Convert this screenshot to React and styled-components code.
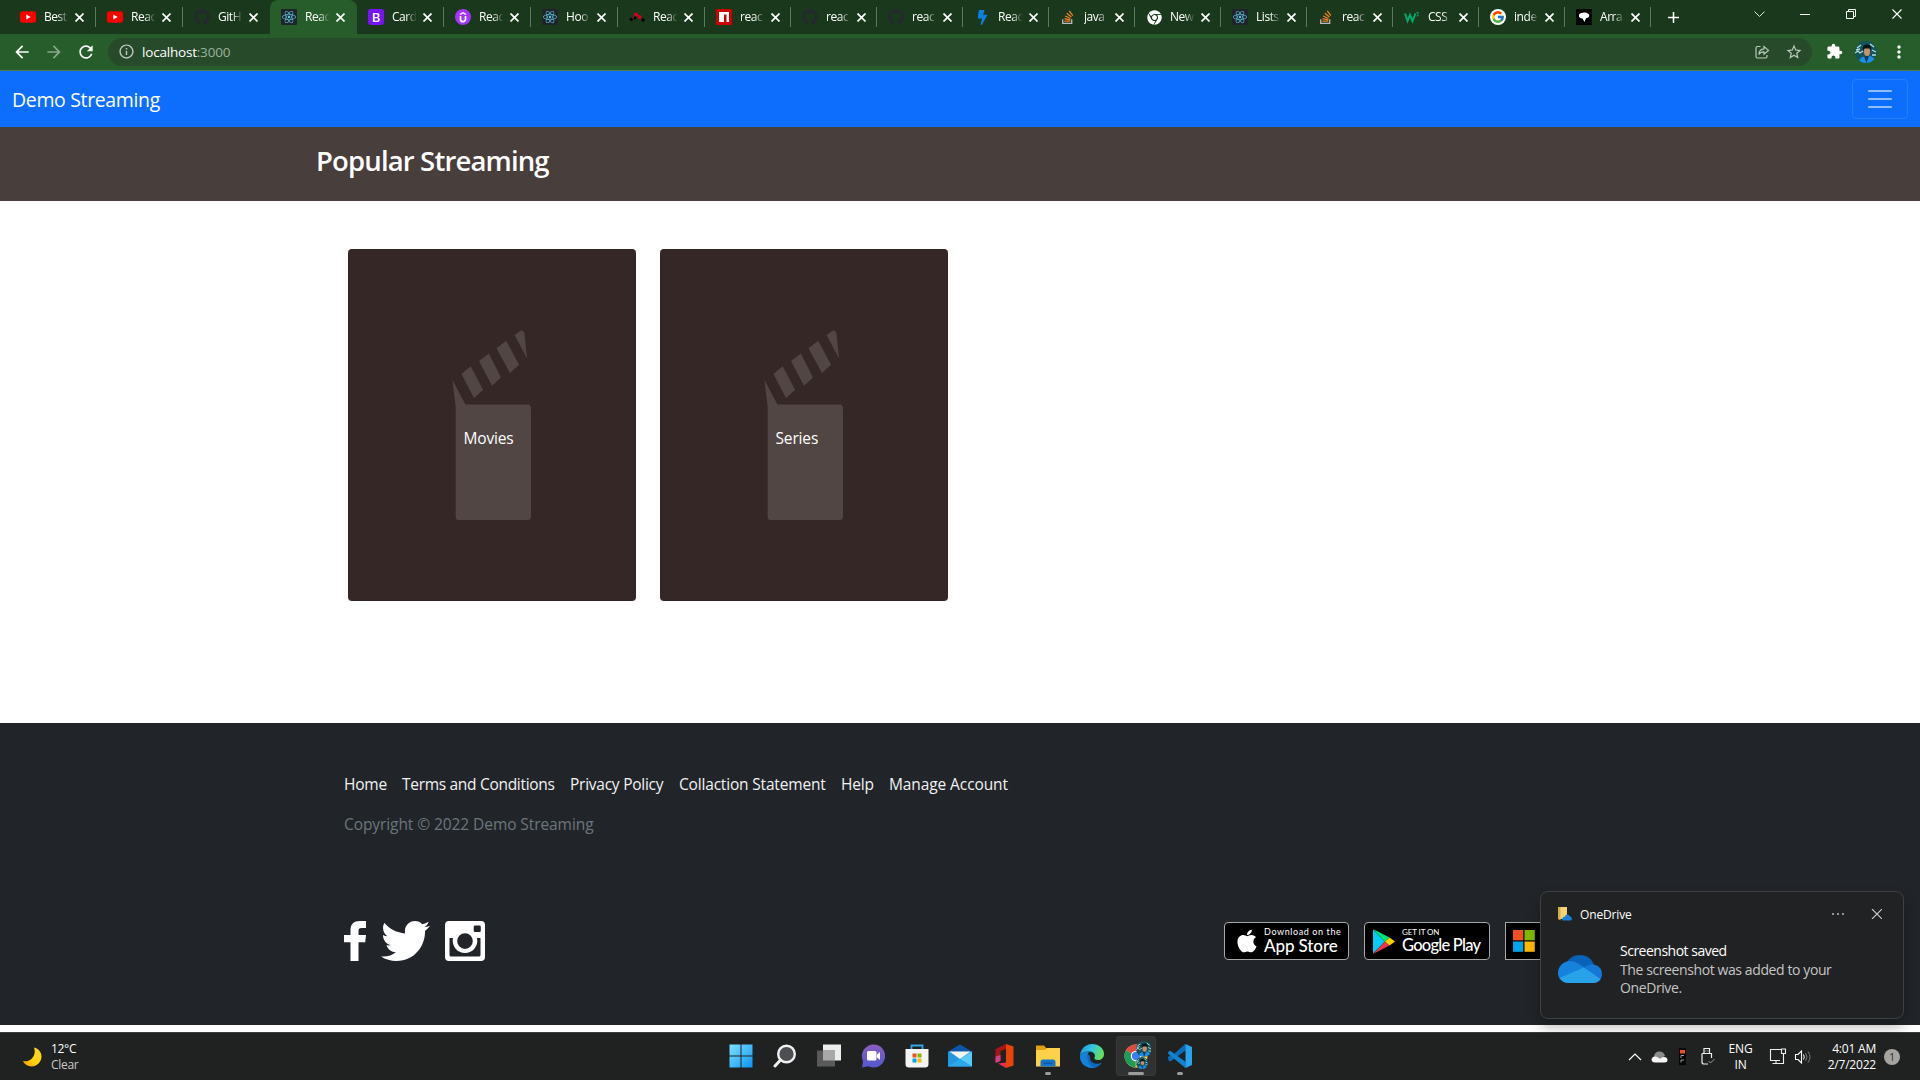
import React from "react";
import styled, { createGlobalStyle, css } from "styled-components";
import { FaReact, FaGithub, FaChrome, FaTwitter, FaApple, FaBolt } from "react-icons/fa";
import { FcGoogle } from "react-icons/fc";
import { MdArrowBack, MdArrowForward, MdRefresh, MdExtension, MdStarBorder, MdMoreVert, MdAdd, MdInfoOutline } from "react-icons/md";

const Global = createGlobalStyle`
  * { box-sizing: border-box; }
  body { margin: 0; overflow: hidden; font-family: "Open Sans", "Noto Sans", sans-serif; background: #fff; }
  svg { display: block; flex: none; }
`;

const Screen = styled.div`
  width: 1920px;
  height: 1080px;
  display: flex;
  flex-direction: column;
  overflow: hidden;
`;

/* ---------- browser ---------- */
const TabStrip = styled.div`
  height: 34px;
  flex: none;
  display: flex;
  align-items: stretch;
  padding-left: 8.5px;
  background: #1a381b;
`;
const Tab = styled.div`
  width: ${(p) => p.$w}px;
  flex: none;
  display: flex;
  align-items: center;
  padding-left: 11.5px;
  position: relative;
  ${(p) =>
    p.$active
      ? css`
          background: #275d2b;
          border-radius: 8px 8px 0 0;
        `
      : css`
          &::after {
            content: "";
            position: absolute;
            right: 0;
            top: 7px;
            width: 1px;
            height: 20px;
            background: ${p.$divider ? "#5d7a5e" : "transparent"};
          }
        `}
`;
const TabTitle = styled.div`
  width: 28px;
  margin: 0 3px 0 8px;
  white-space: nowrap;
  font-size: 12px;
  line-height: 16px;
  letter-spacing: -0.45px;
  color: #fff;
  mask-image: linear-gradient(90deg, #000 50%, transparent 88%);
`;
const Fav = styled.div`
  width: 16px;
  height: 16px;
  flex: none;
  display: flex;
  align-items: center;
  justify-content: center;
  border-radius: ${(p) => p.$r || 0}px;
  background: ${(p) => p.$bg || "transparent"};
  color: ${(p) => p.$c || "#fff"};
  font: ${(p) => p.$wt || 600} ${(p) => p.$fs || 12}px "Open Sans", sans-serif;
`;
const NewTab = styled.div`
  display: flex;
  align-items: center;
  padding-left: 13px;
  color: #fff;
`;
const WindowButtons = styled.div`
  margin-left: auto;
  display: flex;
  height: 28px;
  align-items: center;
  & > div {
    width: 46px;
    display: flex;
    justify-content: center;
  }
`;
const Toolbar = styled.div`
  height: 37px;
  flex: none;
  display: flex;
  align-items: center;
  padding: 0 0 1px 12px;
  background: #275d2b;
  border-bottom: 1px solid #4b7d4f;
  color: #fff;
`;
const Nav = styled.div`
  display: flex;
  gap: 12px;
  width: 96px;
  & > :nth-child(2) {
    opacity: 0.45;
  }
`;
const Omnibox = styled.div`
  width: 1704px;
  height: 28px;
  border-radius: 14px;
  background: #264a2a;
  display: flex;
  align-items: center;
  padding: 0 9px 0 10px;
  color: #bcc8bd;
`;
const Url = styled.div`
  flex: 1;
  margin-left: 7px;
  font-size: 13.5px;
  line-height: 20px;
  letter-spacing: -0.2px;
  color: #9eb09f;
  b {
    font-weight: 400;
    color: #fff;
  }
`;
const OmniActions = styled.div`
  display: flex;
  align-items: center;
  gap: 15px;
`;
const ToolbarEnd = styled.div`
  display: flex;
  align-items: center;
  padding-left: 14px;
  gap: 12px;
`;

/* ---------- page ---------- */
const Navbar = styled.header`
  height: 56px;
  flex: none;
  background: #0d6efd;
  display: flex;
  align-items: center;
  justify-content: space-between;
  padding: 0 12px;
`;
const Brand = styled.div`
  padding-top: 1px;
  font-size: 19.5px;
  line-height: 30px;
  letter-spacing: -0.35px;
  color: #fff;
`;
const Toggler = styled.div`
  width: 56px;
  height: 40px;
  border: 1px solid rgba(255, 255, 255, 0.1);
  border-radius: 4px;
  display: flex;
  flex-direction: column;
  align-items: center;
  justify-content: center;
  gap: 6px;
  i {
    width: 24px;
    height: 2px;
    border-radius: 1px;
    background: rgba(255, 255, 255, 0.55);
  }
`;
const Banner = styled.div`
  height: 74px;
  flex: none;
  background: #483e3c;
  padding: 14px 0 0 316px;
`;
const Title = styled.h3`
  margin: 0;
  font-size: 27.5px;
  line-height: 40px;
  font-weight: 600;
  letter-spacing: -0.85px;
  color: #fff;
`;
const Cards = styled.main`
  height: 522px;
  flex: none;
  padding: 48px 0 0 348px;
  display: flex;
  align-items: flex-start;
  gap: 24px;
  background: #fff;
`;
const Card = styled.article`
  width: 288px;
  height: 352px;
  border-radius: 4px;
  background: #352726;
  display: grid;
  & > * {
    grid-area: 1 / 1;
  }
`;
const CardLabel = styled.div`
  align-self: center;
  padding: 25px 0 0 115.5px;
  font-size: 15.5px;
  line-height: 24px;
  letter-spacing: -0.15px;
  color: #fff;
`;
const Footer = styled.footer`
  height: 302px;
  flex: none;
  background: #212529;
  padding: 49px 0 0 344px;
`;
const Links = styled.nav`
  display: flex;
  gap: 15px;
  height: 24px;
`;
const FootLink = styled.a`
  width: ${(p) => p.$w}px;
  font-size: 15.5px;
  line-height: 24px;
  white-space: nowrap;
  letter-spacing: ${(p) => p.$ls}px;
  color: #f1f2f3;
`;
const Copyright = styled.div`
  margin-top: 16px;
  font-size: 15.5px;
  line-height: 24px;
  letter-spacing: -0.08px;
  color: #6c757d;
`;
const FootRow = styled.div`
  display: flex;
  align-items: center;
  margin-top: 85px;
  height: 40px;
`;
const Social = styled.div`
  display: flex;
  gap: 15px;
  width: 880px;
`;
const Stores = styled.div`
  display: flex;
  gap: 15px;
`;
const Store = styled.div`
  width: ${(p) => p.$w}px;
  height: 38px;
  flex: none;
  background: #000;
  border: 1px solid #a6a6a6;
  border-radius: ${(p) => p.$r}px;
  display: flex;
  align-items: center;
  padding-left: ${(p) => p.$pl}px;
  gap: ${(p) => p.$gap}px;
  color: #fff;
`;
const StoreText = styled.div`
  display: flex;
  flex-direction: column;
  white-space: nowrap;
  margin-top: -2px;
  small {
    font: 400 ${(p) => p.$s1}px/10px Lato, sans-serif;
    letter-spacing: ${(p) => p.$l1}px;
  }
  span {
    font: 500 ${(p) => p.$s2}px/17px Lato, sans-serif;
    letter-spacing: ${(p) => p.$l2}px;
  }
`;
const PageEnd = styled.div`
  height: 7px;
  flex: none;
  background: #fff;
`;

/* ---------- taskbar ---------- */
const Taskbar = styled.div`
  height: 48px;
  flex: none;
  background: #202121;
  display: grid;
  grid-template-columns: 720px 480px 1fr;
  border-top: 1px solid #3c3c3c;
  color: #fff;
  font-size: 12px;
  line-height: 16px;
`;
const Weather = styled.div`
  display: flex;
  align-items: center;
  padding-left: 22px;
  gap: 9px;
`;
const Lines = styled.div`
  text-align: ${(p) => p.$a || "left"};
  width: ${(p) => (p.$w ? p.$w + "px" : "auto")};
  letter-spacing: ${(p) => p.$ls || 0}px;
  white-space: nowrap;
  span {
    color: #c9c9c9;
  }
`;
const Apps = styled.div`
  display: flex;
  gap: 4px;
  padding: 3px 0 0 1px;
`;
const TaskButton = styled.div`
  width: 40px;
  height: 40px;
  border-radius: 4px;
  position: relative;
  display: flex;
  align-items: center;
  justify-content: center;
  background: ${(p) => (p.$on ? "#303132" : "transparent")};
  box-shadow: ${(p) => (p.$on ? "inset 0 0 0 1px #373838" : "none")};
  &::after {
    content: "";
    position: absolute;
    bottom: 1px;
    width: ${(p) => p.$bar || 0}px;
    height: 3px;
    border-radius: 2px;
    background: #9d9c9b;
  }
`;
const Tray = styled.div`
  display: flex;
  align-items: center;
  padding-left: 428px;
`;
const TrayItem = styled.div`
  width: ${(p) => p.$w}px;
  flex: none;
  display: flex;
`;
const Count = styled.div`
  width: 16px;
  height: 16px;
  margin-left: 8px;
  border-radius: 50%;
  background: #a5a4a0;
  color: #2a2a2a;
  font-size: 10px;
  line-height: 16px;
  text-align: center;
`;

/* ---------- notification ---------- */
const Toast = styled.aside`
  position: absolute;
  left: 1540px;
  top: 891px;
  width: 364px;
  height: 128px;
  border: 1px solid #3f4041;
  border-radius: 8px;
  background: #212223;
  box-shadow: 0 8px 14px rgba(0, 0, 0, 0.28);
  color: #fff;
`;
const ToastHead = styled.div`
  display: flex;
  align-items: center;
  height: 44px;
  padding: 0 21px 0 17px;
  font-size: 12px;
  letter-spacing: -0.15px;
  & > span {
    margin-left: 8px;
    flex: 1;
  }
`;
const ToastBody = styled.div`
  display: flex;
  padding: 6px 0 0 17px;
  gap: 18px;
`;
const ToastText = styled.div`
  font-size: 14px;
  line-height: 18px;
  color: #c5c5c5;
  white-space: nowrap;
  letter-spacing: -0.4px;
  strong {
    display: block;
    margin-top: -1px;
    font-weight: 400;
    line-height: 20px;
    letter-spacing: -0.5px;
    color: #fff;
  }
`;

const favs = {
  yt: (
    <svg width="16" height="16" viewBox="0 0 16 16"><rect y="2.3" width="16" height="11.4" rx="2.6" fill="#f00" /><path d="M6.3 5.5v5l4.4-2.5z" fill="#fff" /></svg>
  ),
  git: <Fav $c="#24292f"><FaGithub size={16} /></Fav>,
  react: <Fav $bg="#20232a" $c="#5cc4e0" $r={1}><FaReact size={14} /></Fav>,
  boot: <Fav $bg="#7713f6" $r={3} $fs={13}>B</Fav>,
  ude: (
    <svg width="16" height="16" viewBox="0 0 16 16" fill="none"><circle cx="8" cy="8" r="8" fill="#a435f0" /><path d="M5.500 7v3.200a2.500 2.500 0 0 0 5 0V7" stroke="#fff" strokeWidth="1.700" /><path d="M5 5.500 8 3.700l3 1.800" stroke="#fff" strokeWidth="1.400" /></svg>
  ),
  dots: (
    <svg width="16" height="16" viewBox="0 0 16 16"><path d="m3 10 4-5 6 6" stroke="#d0021b" strokeWidth="1" fill="none" /><g fill="#d0021b"><circle cx="7" cy="5.5" r="2" /><circle cx="10.5" cy="8" r="2" /></g><g fill="#000"><circle cx="2.2" cy="10.3" r="1.6" /><circle cx="6" cy="9" r="1.4" /><circle cx="14" cy="11" r="1.7" /></g></svg>
  ),
  npm: <svg width="16" height="16" viewBox="0 0 16 16"><path fill="#cb0000" d="M0 0h16v16H0z" /><path fill="#fff" d="M3 3h10v10h-2.5V5.5H8V13H3z" /></svg>,
  bolt: <Fav $c="#0e7fe0"><FaBolt size={15} /></Fav>,
  so: (
    <svg width="16" height="16" viewBox="0 0 16 16" fill="none">
      <path d="M2.7 10.3v4h9v-4" stroke="#bcbbbb" strokeWidth="1.3" />
      <path d="M4.3 12.2h6M4.5 9.7l5.8 1.1M5.2 7l5.3 2.5M6.8 4.2l4.6 3.8M9.3 1.8l3.5 4.8" stroke="#f48024" strokeWidth="1.3" />
    </svg>
  ),
  chrome: <Fav><FaChrome size={15} /></Fav>,
  w3: (
    <svg width="16" height="16" viewBox="0 0 16 16" fill="none" stroke="#04aa6d"><path d="m1 4.500 2.500 7.500L6 6l2.500 6L11.500 4.500" strokeWidth="2" /><path d="M12.500 3.500h2l-1 1.500q1.500.5.5 1.800l-1.500.2" strokeWidth=".9" /></svg>
  ),
  google: <Fav $bg="#fff" $r={8}><FcGoogle size={14} /></Fav>,
  arr: <svg width="16" height="16" viewBox="0 0 16 16"><path d="M0 0h16v16H0z" /><path fill="#fff" d="M3 5.500C4.500 3 11 2.500 13 5.500c.8 2-.5 3.500-3 3.800L8.500 13 6.500 9.500C4 9.500 2.500 8 3 5.500z" /></svg>,
};

const tabs = [
  ["yt", "Best"], ["yt", "Reac"], ["git", "GitH"], ["react", "Reac"], ["boot", "Card"], ["ude", "Reac"], ["react", "Hoo"], ["dots", "Reac"],
  ["npm", "reac"], ["git", "reac"], ["git", "reac"], ["bolt", "Reac"], ["so", "java"], ["chrome", "New"], ["react", "Lists"], ["so", "reac"],
  ["w3", "CSS"], ["google", "inde"], ["arr", "Arra"],
];

const links = [
  ["Home", 43, -0.2], ["Terms and Conditions", 153, -0.3], ["Privacy Policy", 94, -0.25],
  ["Collaction Statement", 147, -0.18], ["Help", 33, -0.2], ["Manage Account", 121, -0.1],
];

const X = ({ s = 8, w = 1.7, c = "#fff" }) => (
  <svg width={s} height={s} viewBox={`0 0 ${s} ${s}`}><path d={`M.5.5 ${s - 0.5} ${s - 0.5}M${s - 0.5}.5.5 ${s - 0.5}`} stroke={c} strokeWidth={w} /></svg>
);

const Avatar = ({ size = 22 }) => (
  <svg width={size} height={size} viewBox="0 0 22 22">
    <clipPath id="av"><circle cx="11" cy="11" r="11" /></clipPath>
    <g clipPath="url(#av)">
      <path fill="#14545a" d="M0 0h22v22H0z" />
      <path d="m0 12 3-2 2 2 3-2M2 7l4-3M15 3l4 3M17 9l4 2M1 9l4-1M17 14l4 0" stroke="#b8dedb" strokeWidth="1.3" fill="none" />
      <path fill="#1c8fe0" d="M4 22c0-5 3-6 7-7s9 1 10 7z" />
      <path fill="#113a63" d="m9 15 2.500 7L14 15z" />
      <ellipse cx="12" cy="10.500" rx="3" ry="4.500" fill="#c98f70" />
      <path fill="#0b1318" d="M8 9.500c-.8-5 1.500-6 4-6s4.800 1.500 4 6L14.800 7.500H9.500z" />
    </g>
  </svg>
);

const Clapper = () => (
  <svg width="288" height="352" viewBox="0 0 288 352">
    <g fill="#524645">
      <path d="M104.400 131 117.500 155.500H180q3 0 3 4.500v107q0 4-3 4h-70q-2.300 0-2.300-4V158z" />
      <path d="m113.400 125 9.400-7.700 12.200 23.400-9 8.300zM131 112l9.800-7.500 12.200 24-9 8.300zM148.500 99.300l9.800-7.500 12.700 24-9 8.300zM166.500 86l7.300-5 2.500 2.500 2.700 26z" />
    </g>
  </svg>
);

const OneCloud = () => (
  <svg width="44" height="46" viewBox="0 -13 44 46">
    <path d="M8 10C10 3 16 0 22 0c7 0 12 4 14 10l-8 10z" fill="#0a62b8" />
    <path d="M11 28C4 28 0 23.500 0 18 0 11 5.500 6 12 6c3 0 5 .8 7 2l10 6-14 12z" fill="#1682dc" />
    <path d="M26 13c2-2 5-3.500 8-3.500 6 0 10 4 10 9.500 0 5-3.500 9-9 9z" fill="#1577d6" />
    <path d="M1.500 23 26 12.500 42.500 24c-1.500 2.500-4.500 4-7.500 4H11c-4 0-7.500-2-9.500-5z" fill="#28a3ea" />
  </svg>
);

export default function App() {
  return (
    <Screen>
      <Global />
      <TabStrip>
        {tabs.map(([f, t], i) => (
          <Tab key={i} $w={i < 8 ? 87 : 86} $active={i === 3} $divider={i !== 2}>
            {favs[f]}
            <TabTitle>{t}</TabTitle>
            <X s={9} />
          </Tab>
        ))}
        <NewTab><MdAdd size={19} /></NewTab>
        <WindowButtons>
          <div><svg width="11" height="7" viewBox="0 0 11 7" fill="none" stroke="#dfe5df"><path d="m.5.5 5 5 5-5" /></svg></div>
          <div><svg width="10" height="1"><path fill="#fff" d="M0 0h10v1H0z" /></svg></div>
          <div><svg width="10" height="10" fill="none" stroke="#fff"><path d="M.5 2.500h7v7h-7zM2.500 2.500v-2h7v7h-2" /></svg></div>
          <div><X s={10} w={1.1} /></div>
        </WindowButtons>
      </TabStrip>
      <Toolbar>
        <Nav><MdArrowBack size={20} /><MdArrowForward size={20} /><MdRefresh size={20} /></Nav>
        <Omnibox>
          <MdInfoOutline size={17} />
          <Url><b>localhost</b>:3000</Url>
          <OmniActions>
            <svg width="16" height="16" viewBox="0 0 16 16" fill="none" stroke="#bcc8bd" strokeWidth="1.200"><path d="M6.500 2.500H3.500q-1.500 0-1.500 1.500v8.500Q2 14 3.500 14h8q1.500 0 1.500-1.500V11" /><path d="M10 2.500v2.300C6.500 5 5 7.500 4.800 10.500 6 8.500 7.500 7.800 10 7.800v2.400l4.500-3.800z" /></svg>
            <MdStarBorder size={18} />
          </OmniActions>
        </Omnibox>
        <ToolbarEnd><MdExtension size={17} /><Avatar /><MdMoreVert size={20} /></ToolbarEnd>
      </Toolbar>

      <Navbar>
        <Brand>Demo Streaming</Brand>
        <Toggler><i /><i /><i /></Toggler>
      </Navbar>
      <Banner><Title>Popular Streaming</Title></Banner>
      <Cards>
        {["Movies", "Series"].map((n) => (
          <Card key={n}><Clapper /><CardLabel>{n}</CardLabel></Card>
        ))}
      </Cards>
      <Footer>
        <Links>
          {links.map(([t, w, ls]) => (
            <FootLink key={t} $w={w} $ls={ls}>{t}</FootLink>
          ))}
        </Links>
        <Copyright>Copyright © 2022 Demo Streaming</Copyright>
        <FootRow>
          <Social>
            <svg width="22" height="40" viewBox="0 0 22 40"><path fill="#fff" d="M22 0v7h-4.500c-2.500 0-3 1.200-3 3v4H22l-.8 7.200h-6.700V40H6.500V21.200H0V14h6.500V9C6.500 3 10 0 16 0z" /></svg>
            <svg width="49" height="40" viewBox="0 48 512 416" preserveAspectRatio="none"><FaTwitter size={512} color="#fff" /></svg>
            <svg width="40" height="40" viewBox="0 0 40 40"><path fillRule="evenodd" fill="#fff" d="M4 0h32a4 4 0 0 1 4 4v32a4 4 0 0 1-4 4H4a4 4 0 0 1-4-4V4a4 4 0 0 1 4-4zm26 4.500a1.300 1.300 0 0 0-1.300 1.300v4a1.300 1.300 0 0 0 1.300 1.300h4.500a1.300 1.300 0 0 0 1.300-1.300v-4a1.300 1.300 0 0 0-1.300-1.300zM4.500 17v17a1.500 1.500 0 0 0 1.500 1.500h28a1.500 1.500 0 0 0 1.500-1.500V17H32a12.300 12.300 0 1 1-24 0zM20 12.300a7.800 7.800 0 1 0 0 15.600 7.800 7.800 0 0 0 0-15.600z" /></svg>
          </Social>
          <Stores>
            <Store $w={125} $r={4} $pl={9} $gap={4}>
              <FaApple size={26} />
              <StoreText $s1={9} $l1={0.6} $s2={17} $l2={-0.1}><small>Download on the</small><span>App Store</span></StoreText>
            </Store>
            <Store $w={126} $r={4} $pl={8} $gap={7}>
              <svg width="22" height="25" viewBox="0 0 22 25"><path fill="#00cdf9" d="M0 .5v24l12-12z" /><path fill="#00e676" d="M0 0l16.500 8.500-4.500 4z" /><path fill="#f43249" d="M0 25l16.500-8.500-4.500-4z" /><path fill="#ffce00" d="m12 12.500 4.500-4 5.500 4-5.500 4z" /></svg>
              <StoreText $s1={8} $l1={-0.1} $s2={16.5} $l2={-0.75}><small>GET IT ON</small><span>Google Play</span></StoreText>
            </Store>
            <Store $w={126} $r={0} $pl={7} $gap={6}>
              <svg width="22" height="22"><path fill="#f25022" d="M0 0h10.300v10.300H0z" /><path fill="#7fba00" d="M11.500 0h10.300v10.300H11.500z" /><path fill="#00a4ef" d="M0 11.500h10.300v10.300H0z" /><path fill="#ffb900" d="M11.500 11.500h10.300v10.300H11.500z" /></svg>
            </Store>
          </Stores>
        </FootRow>
      </Footer>
      <PageEnd />

      <Taskbar>
        <Weather>
          <svg width="20" height="20" viewBox="0 0 20 20"><defs><linearGradient id="mn" x1="1" y1="0" x2="0" y2="1"><stop stopColor="#ffd42a" /><stop offset=".55" stopColor="#ffd60a" /><stop offset="1" stopColor="#f59a00" /></linearGradient></defs><path fill="url(#mn)" d="M12 .5c8 2 10 11 4 16.500C10.500 21.500 3.500 19.500.8 14 8 16 15 9 12 .5z" /></svg>
          <Lines $ls={-0.3}>12°C<br /><span>Clear</span></Lines>
        </Weather>
        <Apps>
          <TaskButton><svg width="24" height="24" viewBox="0 0 24 24"><defs><linearGradient id="wn" x1="0" y1="0" x2="1" y2="1"><stop stopColor="#7fe3ff" /><stop offset="1" stopColor="#0c93f5" /></linearGradient></defs><path fill="url(#wn)" d="M.5.5h11v11H.5zM12.500.5h11v11h-11zM.5 12.500h11v11H.5zM12.500 12.500h11v11h-11z" /></svg></TaskButton>
          <TaskButton><svg width="24" height="24" viewBox="0 0 24 24" fill="none"><circle cx="13.500" cy="10" r="8.300" fill="#4b4f52" stroke="#f0f0f0" strokeWidth="2.400" /><path d="M7.500 16 2 22" stroke="#f0f0f0" strokeWidth="3" strokeLinecap="round" /></svg></TaskButton>
          <TaskButton><svg width="24" height="24" viewBox="0 0 24 24"><path fill="#eee" d="M6 .5h18v16H6z" /><path fill="#5a5a5a" d="M0 6.500h18v16H0z" /><path fill="#a9a9a9" d="M6 6.500h12v10H6z" /></svg></TaskButton>
          <TaskButton><svg width="24" height="24" viewBox="0 0 24 24"><defs><linearGradient id="ch" x1="0" y1="0" x2="0" y2="1"><stop stopColor="#8a5fc0" /><stop offset="1" stopColor="#5258cf" /></linearGradient></defs><path fill="url(#ch)" d="M12.500 .5a11.500 11.500 0 1 1-5 21.800L1 23.500l1-6.500A11.500 11.500 0 0 1 12.500 .5z" /><rect x="6" y="7" width="9.500" height="9.500" rx="1.500" fill="#fff" /><path fill="#fff" d="M16 10.500 19 8v8l-3-2.500z" /></svg></TaskButton>
          <TaskButton><svg width="24" height="24" viewBox="0 0 24 24"><path d="M6.500 6V1.500h11V6" fill="none" stroke="#2fa8ea" strokeWidth="1.800" /><path fill="#f4f4f4" d="M.5 5h23v15q0 3.500-3.500 3.500H4Q.5 23.500.5 20z" /><path fill="#f25022" d="M7.500 9.500h4v4h-4z" /><path fill="#7fba00" d="M12.500 9.500h4v4h-4z" /><path fill="#00a4ef" d="M7.500 14.500h4v4h-4z" /><path fill="#ffb900" d="M12.500 14.500h4v4h-4z" /></svg></TaskButton>
          <TaskButton><svg width="24" height="24" viewBox="0 0 24 24"><path fill="#0f56a8" d="M0 7.500 12 .5l12 7z" /><path fill="#2398e2" d="M0 7.500h24v15H0z" /><path fill="#f4f4f4" d="M1.500 7.500h21L12 15z" /><path fill="#57ccf5" d="M24 7.500v15L12 15z" /><path fill="#2fa6e8" d="m0 22.500 12-7.500 12 7.500z" /></svg></TaskButton>
          <TaskButton><svg width="24" height="24" viewBox="0 0 24 24"><path fill="#e8430a" d="m14 0 7.500 2.500v19L14 24z" /><path fill="#a81515" d="M14 0v5L8.500 7v10L3.500 18.500V5z" /><path fill="#d83b8a" d="M3.500 12.500 8.500 11v6l-5 2z" /><path fill="#e33050" d="m6 19.500 8-1V24z" /></svg></TaskButton>
          <TaskButton $bar={6}><svg width="24" height="24" viewBox="0 0 24 24"><path fill="#dfa013" d="M0 1.500h8l2.500 3H24V10H0z" /><path fill="#ffd04a" d="M0 6h8.500L11 4h13v18.500H0z" /><path fill="#1277cc" d="M4.500 22.500V18q0-2.500 2.500-2.500h10q2.500 0 2.500 2.500v4.500z" /><path fill="#0b569c" d="M7.500 18.500h9V20h-9z" /></svg></TaskButton>
          <TaskButton><svg width="24" height="24" viewBox="0 0 24 24"><defs><linearGradient id="eg" x1="0" y1="0" x2="1" y2=".3"><stop stopColor="#1a8fe0" /><stop offset=".55" stopColor="#36c6e0" /><stop offset="1" stopColor="#63e05c" /></linearGradient></defs><path fill="#0f68bd" d="M0 12c0 7 5 12 12 12 4 0 8-2 10-5.500-6 3-13 .5-12-6.500C6 8 1 8 0 12z" /><path fill="url(#eg)" d="M0 11.500C.5 5 5.500 0 12 0c7 0 12 4.500 12 10 0 4-3 6-6 6-3 0-4-1-3.500-2.500C16 11 14 8 10 7.500 5.500 7 1.500 8.500 0 11.500z" /><path fill="#1580d5" d="M0 12C1.500 8.500 5.500 7 10 7.500 7.500 9 6.500 12 7.500 15.500c1 4 4 7.500 7.500 8.200C7 25 0 20 0 12z" /></svg></TaskButton>
          <TaskButton $on $bar={16}>
            <svg width="30" height="30" viewBox="-1 -1 30 30"><circle cx="14" cy="14" r="11.500" fill="#ffcd40" /><path fill="#e04a3f" d="M14 14 4 8.200A11.500 11.500 0 0 1 24 8.200z" /><path fill="#1f9d58" d="M14 14 13.500 25.500A11.500 11.500 0 0 1 4 8.200z" /><circle cx="14" cy="14" r="5.300" fill="#fff" /><circle cx="14" cy="14" r="4.200" fill="#3f7ef0" /><g transform="translate(14 -1) scale(.72)"><Avatar /></g><g transform="translate(14 15) scale(.55)"><Avatar /></g></svg>
          </TaskButton>
          <TaskButton $bar={6}><svg width="24" height="24" viewBox="0 0 24 24"><path fill="#0b6cb8" d="M17.500 0 3.500 13 1 15.200 0 14.500v-1.800L17.500 5z" /><path fill="#0b6cb8" d="M17.500 0v6.500L2.500 17.500.3 16.200v-1.400z" /><path fill="#1283d0" d="M0 8.200 2.200 6.800 17.500 17.800V24L.3 10z" /><path fill="#2aa3ef" d="M17.500 0 24 3v18l-6.500 3z" /></svg></TaskButton>
        </Apps>
        <Tray>
          <TrayItem $w={23}><svg width="14" height="8" fill="none" stroke="#fff" strokeWidth="1.200"><path d="m1 7 6-6 6 6" /></svg></TrayItem>
          <TrayItem $w={28}><svg width="17" height="12" viewBox="0 0 17 12"><path fill="#8b8b8b" d="M3 6C3 2.500 5.500.5 8.500.5S13.500 2.500 14 5l-6 3z" /><path fill="#f5f5f5" d="M4 11.500C1.500 11.500.5 10 .5 8.500S2 5.500 4 5.500c1.200 0 2 .3 3 1l2 1.200C10 6.500 11.500 6 13 6c2 0 3.500 1.200 3.500 3s-1.500 2.500-3 2.500z" /></svg></TrayItem>
          <TrayItem $w={22}><svg width="7" height="17" viewBox="0 0 7 17"><path d="M0 0h7v17H0z" fill="#050505" /><path fill="#f04a22" d="M1 2h5v3.500H1z" /><path d="M2 10V7.500h3M2 14.500V12h3" fill="none" stroke="#999" /></svg></TrayItem>
          <TrayItem $w={27}><svg width="14" height="17" viewBox="0 0 14 17" fill="none" stroke="#eee"><path d="M3 5.500V.5h5.500v5M1 5.500h9.500V10M1 5.500V14q0 2 2 2h4M4.500 3h.8M6.500 3h.8" strokeWidth="1.200" /><path d="m7.500 13 2 2L13.500 11" stroke="#999" /></svg></TrayItem>
          <Lines $w={25} $a="center" $ls={-0.2}>ENG<br />IN</Lines>
          <TrayItem $w={25}><svg width="34" height="17" viewBox="-17 0 34 17" fill="none" stroke="#eee"><path d="M11 1.500H.5v11H10M6 12.500V15M2.500 15.500H10M11.500 1h4v4.500h-4zM13.500 5.500V15.500H10" strokeWidth="1.100" /></svg></TrayItem>
          <TrayItem $w={39}><svg width="34" height="14" viewBox="-17 0 34 14" fill="none"><path d="M.5 4.500H3L6.500 1v12L3 9.500H.5z" stroke="#fff" strokeWidth="1.100" /><path d="M8.500 4.500q1.500 2.500 0 5" stroke="#fff" /><path d="M10.500 3q3 4 0 8M13 1.500q4 5.500 0 11" stroke="#777" /></svg></TrayItem>
          <Lines $w={59} $a="right" $ls={-0.2}>4:01 AM<br />2/7/2022</Lines>
          <Count>1</Count>
        </Tray>
      </Taskbar>

      <Toast>
        <ToastHead>
          <svg width="14" height="14" viewBox="0 0 14 14"><path fill="#f4d27a" d="M0 0h9v12H0z" /><path fill="#d8ac48" d="M0 0h2.500v13.500L0 12z" /><path fill="#1a7fd8" d="M4.500 13.500c-1-2.500 1-4 2.500-4C8 6.500 11 7 12 9.500c2 .5 2.500 3 1 4z" /></svg>
          <span>OneDrive</span>
          <svg width="12" height="2"><g fill="#ccc"><circle cx="1" cy="1" r=".9" /><circle cx="6" cy="1" r=".9" /><circle cx="11" cy="1" r=".9" /></g></svg>
          <svg width="38" height="10" viewBox="-28 0 38 10"><path d="m0 0 10 10M10 0 0 10" stroke="#ccc" strokeWidth="1.100" /></svg>
        </ToastHead>
        <ToastBody>
          <OneCloud />
          <ToastText><strong>Screenshot saved</strong>The screenshot was added to your<br />OneDrive.</ToastText>
        </ToastBody>
      </Toast>
    </Screen>
  );
}
